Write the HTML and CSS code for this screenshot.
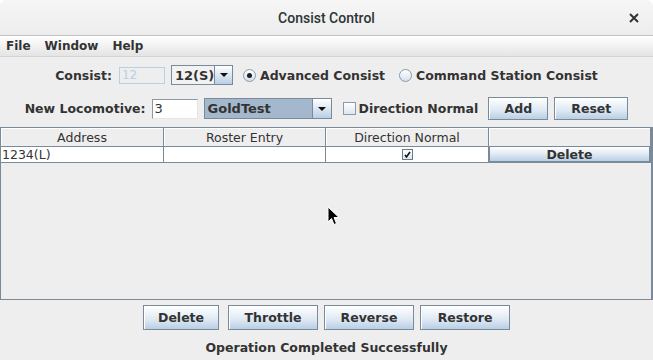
FILE: index.html
```html
<!DOCTYPE html>
<html lang="en">
<head>
    <meta charset="UTF-8">
    <title>Consist Control</title>
    <link rel="stylesheet" href="styles.css">
</head>
<body>
    <div class="window">
        <!-- Title Bar -->
        <div class="titlebar">
            <span></span>
            <span class="title">Consist Control</span>
            <span class="close">
                <svg width="10" height="10" viewBox="0 0 10 10"><path d="M1 1 L9 9 M9 1 L1 9" stroke="#2e3436" stroke-width="2"/></svg>
            </span>
        </div>

        <!-- Menu -->
        <div class="menubar">
            <span class="menu-item">File</span>
            <span class="menu-item">Window</span>
            <span class="menu-item">Help</span>
        </div>

        <!-- Consist selection -->
        <div class="row row-consist">
            <span class="label">Consist:</span>
            <span class="field field-disabled">12</span>
            <span class="combo combo-consist">
                <span class="combo-value">12(S)</span>
                <span class="combo-arrow"><span class="triangle"></span></span>
            </span>
            <span class="radio radio-first checked"></span>
            <span class="label">Advanced Consist</span>
            <span class="radio radio-second"></span>
            <span class="label">Command Station Consist</span>
        </div>

        <!-- New locomotive -->
        <div class="row row-loco">
            <span class="label">New Locomotive:</span>
            <span class="field field-loco">3</span>
            <span class="combo combo-roster">
                <span class="combo-value">GoldTest</span>
                <span class="combo-arrow"><span class="triangle"></span></span>
            </span>
            <span class="checkbox"></span>
            <span class="label">Direction Normal</span>
            <button class="btn btn-add">Add</button>
            <button class="btn btn-reset">Reset</button>
        </div>

        <!-- Locomotive table -->
        <div class="table-pane">
            <div class="table">
                <div class="th">Address</div>
                <div class="th">Roster Entry</div>
                <div class="th">Direction Normal</div>
                <div class="th"></div>

                <div class="td td-left">1234(L)</div>
                <div class="td"></div>
                <div class="td td-center">
                    <span class="cell-check">
                        <svg width="9" height="9" viewBox="0 0 9 9"><path d="M2 5 L3.5 7 L7 2" stroke="#111" stroke-width="1.6" fill="none"/></svg>
                    </span>
                </div>
                <div class="td td-button"><span class="cell-btn">Delete</span></div>
            </div>
        </div>

        <!-- Actions -->
        <div class="actions">
            <button class="btn btn-delete">Delete</button>
            <button class="btn">Throttle</button>
            <button class="btn">Reverse</button>
            <button class="btn">Restore</button>
        </div>

        <p class="status">Operation Completed Successfully</p>

        <!-- mouse pointer -->
        <svg class="cursor" width="13" height="20" viewBox="0 0 13 20">
            <path d="M1 1 L1 16 L4.5 12.5 L7 18.5 L9.5 17.5 L7 11.5 L12 11.5 Z" fill="#000" stroke="#fff" stroke-width="1"/>
        </svg>
    </div>
</body>
</html>
```

FILE: styles.css
```css
:root {
    /* Colors */
    --window-bg: #eeeeee;
    --border-color: #7a8a99;
    --text-color: #333333;
    --btn-top: #ffffff;
    --btn-bottom: #b8cfe5;
    --select-bg: #a3b8cc;
    --disabled-color: #b8cfe5;
}

body {
    margin: 0;
    padding: 0;
    width: 653px;
    height: 360px;
    overflow: hidden;
    background-color: #ffffff;
    font-family: "DejaVu Sans", sans-serif;
    font-size: 12.5px;
    color: var(--text-color);
}

.window {
    position: relative;
    height: 360px;
    display: flex;
    flex-direction: column;
    background-color: var(--window-bg);
    border-radius: 7px 7px 0 0;
    overflow: hidden;
}

/* Title Bar */
.titlebar {
    flex: none;
    height: 35px;
    display: grid;
    grid-template-columns: 1fr auto 1fr;
    align-items: center;
    background: linear-gradient(#f6f6f6, #ededed);
    border-bottom: 1px solid #c2c2c2;
}

.title {
    font-family: Roboto, sans-serif;
    font-weight: 500;
    font-size: 14px;
    color: #2e3436;
    padding-top: 1px;
}

.close {
    justify-self: end;
    padding-right: 14px;
    display: flex;
}

/* Menu */
.menubar {
    flex: none;
    height: 20px;
    display: flex;
    align-items: center;
    background: linear-gradient(#ffffff, #e4e4e4);
    border-bottom: 1px solid #d2d2d2;
}

.menu-item {
    font-size: 12px;
    font-weight: bold;
    padding: 0 7px;
    color: #333333;
}

.menu-item:first-child {
    padding-left: 6px;
}

/* Rows */
.row {
    flex: none;
    display: flex;
    align-items: center;
    justify-content: center;
}

.row-consist {
    margin-top: 8px;
    height: 20px;
}

.row-loco {
    margin-top: 12px;
    height: 23px;
}

.label {
    font-weight: bold;
    white-space: nowrap;
}

.field {
    box-sizing: border-box;
    width: 46px;
    padding-left: 2px;
    font-size: 12px;
    display: flex;
    align-items: center;
}

.field-disabled {
    height: 17px;
    margin: 0 6px 0 7px;
    border: 1px solid var(--disabled-color);
    color: var(--disabled-color);
}

.field-loco {
    height: 20px;
    margin: 0 6px 0 6px;
    background-color: #ffffff;
    border: 1px solid #8c98a4;
    border-right-color: #e6e6e6;
    border-bottom-color: #e6e6e6;
    font-size: 13px;
}

.combo {
    box-sizing: border-box;
    display: flex;
    align-items: stretch;
    border: 1px solid var(--border-color);
}

.combo-value {
    flex: 1;
    font-weight: bold;
    padding-left: 3px;
    display: flex;
    align-items: center;
    font-size: 13px;
}

.combo-arrow {
    width: 18px;
    display: flex;
    align-items: center;
    justify-content: center;
    border-left: 1px solid var(--border-color);
    background: linear-gradient(var(--btn-top), var(--btn-bottom));
}

.triangle {
    width: 0;
    height: 0;
    border-left: 4px solid transparent;
    border-right: 4px solid transparent;
    border-top: 4px solid #111111;
}

.combo-consist {
    width: 62px;
    height: 20px;
    background-color: #f2f2f2;
}

.combo-roster {
    width: 128px;
    height: 21px;
    background-color: var(--select-bg);
}

.radio {
    box-sizing: border-box;
    width: 13px;
    height: 13px;
    border-radius: 50%;
    border: 1px solid #8a9aaa;
    background: linear-gradient(#ffffff, #d4e0ec);
    margin-right: 4px;
    display: flex;
    align-items: center;
    justify-content: center;
}

.radio.checked::after {
    content: "";
    width: 5px;
    height: 5px;
    border-radius: 50%;
    background-color: #222222;
}

.radio-first {
    margin-left: 10px;
}

.radio-second {
    margin-left: 14px;
}

.checkbox {
    box-sizing: border-box;
    width: 13px;
    height: 13px;
    margin: 0 3px 0 11px;
    border: 1px solid #8a9aaa;
    background: linear-gradient(#ffffff, #dce6f0);
}

/* Buttons */
.btn {
    box-sizing: border-box;
    height: 23px;
    padding: 0 14px;
    font-family: "DejaVu Sans", sans-serif;
    font-size: 12.5px;
    font-weight: bold;
    color: var(--text-color);
    border: 1px solid var(--border-color);
    border-radius: 0;
    background: linear-gradient(var(--btn-top), #dde8f3 60%, var(--btn-bottom));
    box-shadow: inset 1px 1px 0 #ffffff;
}

.btn-add {
    width: 60px;
    margin-left: 10px;
}

.btn-reset {
    width: 74px;
    margin-left: 6px;
}

/* Table */
.table-pane {
    flex: none;
    height: 173px;
    margin-top: 7px;
    box-sizing: border-box;
    border: 1px solid var(--border-color);
    border-right-width: 2px;
}

.table {
    display: grid;
    grid-template-columns: 163px 162px 163px 162px;
    grid-template-rows: 19px 16px;
}

.th,
.td {
    box-sizing: border-box;
    border-right: 1px solid var(--border-color);
    border-bottom: 1px solid var(--border-color);
    display: flex;
    align-items: center;
    justify-content: center;
    white-space: nowrap;
}

.th {
    background-color: var(--window-bg);
    box-shadow: inset 1px 1px 0 #ffffff;
    padding-top: 1px;
}

.td {
    background-color: #ffffff;
}

.td-left {
    justify-content: flex-start;
    padding-left: 1px;
}

.cell-check {
    box-sizing: border-box;
    width: 11px;
    height: 11px;
    border: 1px solid #6a7a89;
    background: linear-gradient(#ffffff, #dce6f0);
    display: flex;
    align-items: center;
    justify-content: center;
}

.td-button {
    align-items: stretch;
    justify-content: stretch;
}

.cell-btn {
    flex: 1;
    display: flex;
    align-items: center;
    justify-content: center;
    font-weight: bold;
    border: 1px solid var(--border-color);
    border-top: none;
    background: linear-gradient(#ffffff, #dde8f3 55%, var(--btn-bottom));
}

/* Bottom actions */
.actions {
    flex: none;
    display: flex;
    justify-content: center;
    gap: 6px;
    margin-top: 5px;
}

.actions .btn {
    height: 25px;
    width: 90px;
}

.actions .btn-delete {
    width: 76px;
    margin-right: 3px;
}

.status {
    margin: 11px 0 0;
    text-align: center;
    font-weight: bold;
    line-height: 14px;
}

.cursor {
    position: absolute;
    left: 327px;
    top: 206px;
}
```
